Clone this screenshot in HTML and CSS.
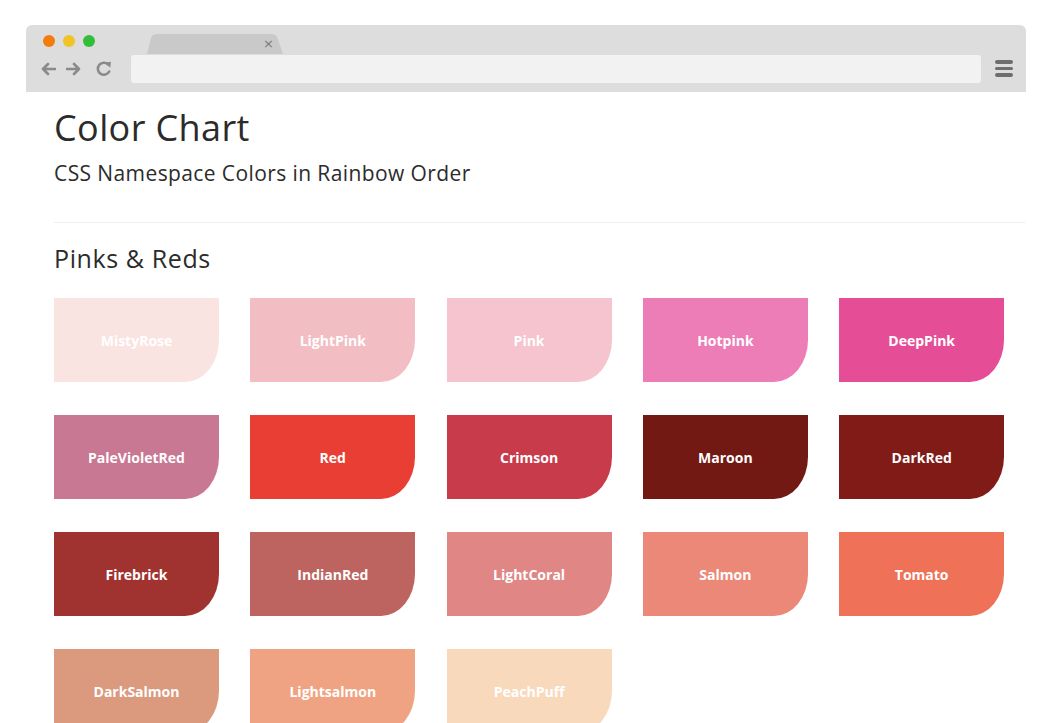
FILE: index.html
```html
<!DOCTYPE html>
<html lang="en">
<head>
<meta charset="utf-8">
<title>Color Chart</title>
<link rel="stylesheet" href="styles.css">
</head>
<body>
<header class="chrome">
  <div class="chrome-top">
    <span class="light light-orange"></span>
    <span class="light light-yellow"></span>
    <span class="light light-green"></span>
    <div class="tab">
      <svg class="tab-shape" width="136" height="20" viewBox="0 0 136 20"><path d="M0 20 L4 4 Q5 0 10 0 L124 0 Q129 0 130.5 4 L136 20 Z" fill="#c9c9c9"/></svg>
      <span class="tab-close">×</span>
    </div>
  </div>
  <div class="chrome-bar">
    <svg class="nav-icon" width="16" height="14" viewBox="0 0 16 14"><path d="M15 7 H3 M8 2 L3 7 L8 12" fill="none" stroke="#8a8a8a" stroke-width="2.6" stroke-linecap="round" stroke-linejoin="round"/></svg>
    <svg class="nav-icon" width="16" height="14" viewBox="0 0 16 14"><path d="M1 7 H13 M8 2 L13 7 L8 12" fill="none" stroke="#8a8a8a" stroke-width="2.6" stroke-linecap="round" stroke-linejoin="round"/></svg>
    <svg class="nav-icon reload" width="18" height="18" viewBox="0 0 18 18"><path d="M14.2 11.5 A6 6 0 1 1 13.2 4.6" fill="none" stroke="#8a8a8a" stroke-width="2.6" stroke-linecap="round"/><path d="M10 2.6 L16 1.8 L15.2 7.8 Z" fill="#8a8a8a"/></svg>
    <div class="address"></div>
    <div class="menu"><span></span><span></span><span></span></div>
  </div>
</header>

<main class="page">
  <h1 class="title">Color Chart</h1>
  <p class="subtitle">CSS Namespace Colors in Rainbow Order</p>
  <hr class="rule">
  <h2 class="section-title">Pinks &amp; Reds</h2>
  <div class="swatches">
    <div class="swatch c-mistyrose">MistyRose</div>
    <div class="swatch c-lightpink">LightPink</div>
    <div class="swatch c-pink">Pink</div>
    <div class="swatch c-hotpink">Hotpink</div>
    <div class="swatch c-deeppink">DeepPink</div>
    <div class="swatch c-palevioletred">PaleVioletRed</div>
    <div class="swatch c-red">Red</div>
    <div class="swatch c-crimson">Crimson</div>
    <div class="swatch c-maroon">Maroon</div>
    <div class="swatch c-darkred">DarkRed</div>
    <div class="swatch c-firebrick">Firebrick</div>
    <div class="swatch c-indianred">IndianRed</div>
    <div class="swatch c-lightcoral">LightCoral</div>
    <div class="swatch c-salmon">Salmon</div>
    <div class="swatch c-tomato">Tomato</div>
    <div class="swatch c-darksalmon">DarkSalmon</div>
    <div class="swatch c-lightsalmon">Lightsalmon</div>
    <div class="swatch c-peachpuff">PeachPuff</div>
  </div>
</main>
</body>
</html>
```
FILE: styles.css
```css
* { box-sizing: border-box; }
html, body { margin: 0; padding: 0; background: #fff; }
body {
  font-family: "Open Sans", Lato, "Liberation Sans", sans-serif;
  color: #2b2b2b;
  overflow: hidden;
  height: 723px;
}

.chrome {
  margin: 25px 26px 0;
  height: 67px;
  background: #dddddd;
  border-radius: 6px 6px 0 0;
}
.chrome-top {
  display: flex;
  align-items: flex-start;
  height: 29px;
  padding-left: 17px;
}
.light {
  width: 12px;
  height: 12px;
  border-radius: 50%;
  margin-top: 10px;
  margin-right: 8px;
}
.light-orange { background: #f47c0c; }
.light-yellow { background: #f0c425; }
.light-green { background: #33be3a; }
.tab {
  position: relative;
  margin-left: 44px;
  margin-top: 9px;
  width: 136px;
  height: 20px;
}
.tab-shape { display: block; }
.tab-close {
  position: absolute;
  right: 9px;
  top: 1px;
  font-family: "DejaVu Sans", sans-serif;
  font-size: 13px;
  line-height: 18px;
  color: #7a7a7a;
}
.chrome-bar {
  display: flex;
  align-items: center;
  height: 29px;
  padding-left: 14px;
  padding-right: 13px;
}
.nav-icon { display: block; margin-right: 10px; }
.nav-icon.reload { margin-left: 3px; margin-right: 0; }
.address {
  margin-left: 18px;
  flex: 1;
  height: 28px;
  background: #f2f2f2;
  border-radius: 3px;
}
.menu {
  margin-left: 14px;
  width: 18px;
  display: flex;
  flex-direction: column;
  gap: 3px;
}
.menu span {
  display: block;
  height: 3.5px;
  border-radius: 2px;
  background: #6e6e6e;
}

.page {
  padding: 0 27px 0 54px;
}
.title {
  margin: 14px 0 0;
  font-size: 36px;
  font-weight: 400;
  line-height: 44px;
  letter-spacing: 0.4px;
}
.subtitle {
  margin: 10px 0 0;
  font-size: 21px;
  line-height: 26px;
  letter-spacing: 0.4px;
}
.rule {
  margin: 36px 0 0;
  border: 0;
  border-top: 1px solid #eeeeee;
  height: 0;
}
.section-title {
  margin: 19px 0 0;
  font-size: 25px;
  font-weight: 400;
  line-height: 32px;
  letter-spacing: 0.6px;
}
.swatches {
  margin-top: 24px;
  display: grid;
  grid-template-columns: repeat(5, 165px);
  grid-auto-rows: 84px;
  column-gap: 31.3px;
  row-gap: 33px;
}
.swatch {
  display: flex;
  align-items: center;
  justify-content: center;
  border-bottom-right-radius: 34px 42px;
  color: #fff;
  font-size: 14px;
  font-weight: 700;
}

.c-mistyrose { background: #fae4e1; }
.c-lightpink { background: #f3bdc4; }
.c-pink { background: #f5c4ce; }
.c-hotpink { background: #ec7db6; }
.c-deeppink { background: #e64d97; }
.c-palevioletred { background: #c97893; }
.c-red { background: #e83e33; }
.c-crimson { background: #c83b4b; }
.c-maroon { background: #731914; }
.c-darkred { background: #811b18; }
.c-firebrick { background: #a0322f; }
.c-indianred { background: #bd6460; }
.c-lightcoral { background: #e08684; }
.c-salmon { background: #eb8878; }
.c-tomato { background: #ee7158; }
.c-darksalmon { background: #db997e; }
.c-lightsalmon { background: #f0a382; }
.c-peachpuff { background: #f8d9bc; }
```
